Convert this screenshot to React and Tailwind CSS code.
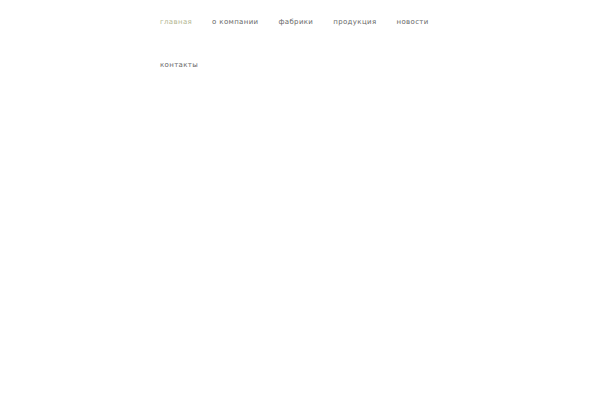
export default function App() {
  const items = ["главная", "о компании", "фабрики", "продукция", "новости", "контакты"];
  return (
    <div className="w-[600px] h-[400px] bg-white">
      <nav className="w-[280px] ml-[160px] pt-[1px] flex flex-wrap gap-x-[20px]" style={{ fontFamily: '"DejaVu Sans", sans-serif' }}>
        {items.map((t, i) => (
          <a key={t} className={`h-[43px] flex items-center text-[7px] tracking-[0.35px] ${i === 0 ? "text-[#b3b690]" : "text-[#666666]"}`}>
            {t}
          </a>
        ))}
      </nav>
    </div>
  );
}
